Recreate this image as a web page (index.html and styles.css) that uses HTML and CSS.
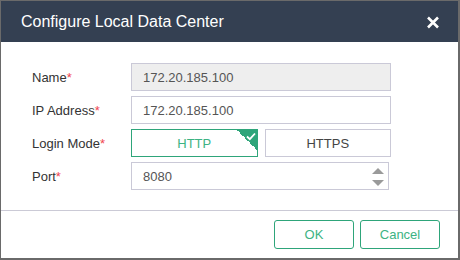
FILE: index.html
```html
<!DOCTYPE html>
<html>
<head>
<meta charset="utf-8">
<link rel="stylesheet" href="styles.css">
</head>
<body>
<div class="dialog">
  <div class="header">
    <span class="title">Configure Local Data Center</span>
    <svg class="close" width="14" height="13" viewBox="0 0 14 13"><path d="M2 1.5 L12 11.5 M12 1.5 L2 11.5" stroke="#fff" stroke-width="2.6" stroke-linecap="butt"/></svg>
  </div>
  <div class="body">
    <div class="row">
      <label class="label">Name<span class="req">*</span></label>
      <div class="field input disabled">172.20.185.100</div>
    </div>
    <div class="row">
      <label class="label">IP Address<span class="req">*</span></label>
      <div class="field input">172.20.185.100</div>
    </div>
    <div class="row">
      <label class="label">Login Mode<span class="req">*</span></label>
      <div class="field modes">
        <div class="mode selected">HTTP
          <span class="corner"><svg width="10" height="9" viewBox="0 0 10 9"><path d="M1 4.5 L3.8 7.2 L9 1.5" stroke="#fff" stroke-width="1.8" fill="none"/></svg></span>
        </div>
        <div class="mode">HTTPS</div>
      </div>
    </div>
    <div class="row">
      <label class="label">Port<span class="req">*</span></label>
      <div class="field input port">8080
        <span class="spin"><span class="up"></span><span class="down"></span></span>
      </div>
    </div>
  </div>
  <div class="footer">
    <button class="btn">OK</button>
    <button class="btn">Cancel</button>
  </div>
</div>
</body>
</html>
```
FILE: styles.css
```css
html, body {
  margin: 0;
  padding: 0;
}
body {
  background: #6a6a6a;
  width: 460px;
  height: 260px;
  padding: 1px 0 0 1px;
  box-sizing: border-box;
  font-family: "Liberation Sans", Arial, sans-serif;
}
.dialog {
  width: 457px;
  height: 257px;
  background: #fff;
  display: flex;
  flex-direction: column;
}
.header {
  height: 41px;
  background: #344052;
  display: flex;
  align-items: center;
  justify-content: space-between;
  padding: 0 18px 0 20px;
  flex-shrink: 0;
}
.title {
  color: #fff;
  font-size: 16px;
  margin-top: 1px;
}
.close {
  display: block;
  margin-top: 2px;
}
.body {
  padding: 21px 0 20px 31px;
  display: flex;
  flex-direction: column;
  gap: 5px;
  border-bottom: 1px solid #cbcad6;
}
.row {
  display: flex;
  align-items: center;
  height: 28px;
}
.label {
  width: 99px;
  font-size: 13px;
  color: #333;
}
.req {
  color: #f0454f;
}
.field {
  width: 260px;
  height: 28px;
  box-sizing: border-box;
}
.input {
  border: 1px solid #cac9d7;
  padding: 0 11px;
  display: flex;
  align-items: center;
  font-size: 13px;
  color: #555;
  position: relative;
}
.disabled {
  background: #eeeeee;
}
.port {
  width: 258px;
}
.spin {
  position: absolute;
  right: 4px;
  top: 5px;
  display: flex;
  flex-direction: column;
  gap: 6px;
}
.up {
  width: 0;
  height: 0;
  border-left: 6px solid transparent;
  border-right: 6px solid transparent;
  border-bottom: 6px solid #9a9a9a;
}
.down {
  width: 0;
  height: 0;
  border-left: 6px solid transparent;
  border-right: 6px solid transparent;
  border-top: 6px solid #9a9a9a;
}
.modes {
  display: flex;
  gap: 7px;
}
.mode {
  flex: 1;
  border: 1px solid #cac9d7;
  display: flex;
  align-items: center;
  justify-content: center;
  font-size: 13px;
  color: #444;
  position: relative;
  overflow: hidden;
}
.mode.selected {
  border-color: #2ea57a;
  color: #3db383;
}
.corner {
  position: absolute;
  top: 0;
  right: 0;
  width: 20px;
  height: 20px;
  background: linear-gradient(to bottom left, #2ea57a 50%, transparent 50%);
}
.corner svg {
  position: absolute;
  top: 2px;
  right: 1px;
}
.footer {
  display: flex;
  justify-content: flex-end;
  gap: 6px;
  padding: 9px 18px 0 0;
}
.btn {
  width: 80px;
  height: 29px;
  border: 1px solid #2ea57a;
  border-radius: 3px;
  background: #fff;
  color: #3db383;
  font-family: "Liberation Sans", Arial, sans-serif;
  font-size: 13px;
  padding: 0;
}
```
